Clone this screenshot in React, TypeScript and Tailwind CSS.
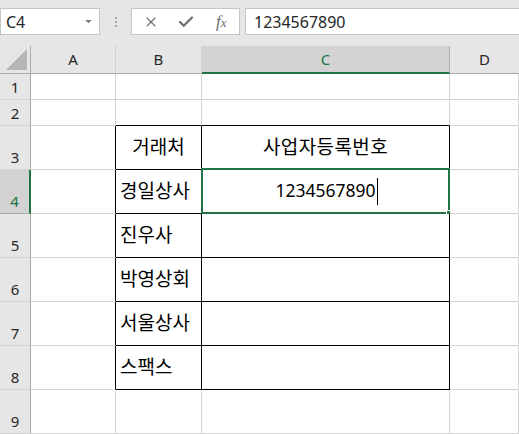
import { Check, ChevronDown, X } from "lucide-react";

const font = { fontFamily: '"Noto Sans", "Noto Sans CJK KR", sans-serif' };

const rows = [
  { n: 1, h: "h-[26px]" },
  { n: 2, h: "h-[26px]" },
  { n: 3, h: "h-[44px]" },
  { n: 4, h: "h-[44px]" },
  { n: 5, h: "h-[44px]" },
  { n: 6, h: "h-[44px]" },
  { n: 7, h: "h-[44px]" },
  { n: 8, h: "h-[44px]" },
  { n: 9, h: "h-[44px]" },
];

const names: Record<number, string> = {
  4: "경일상사",
  5: "진우사",
  6: "박영상회",
  7: "서울상사",
  8: "스팩스",
};

function Cell({ row, col }: { row: number; col: string }) {
  const inTable = row >= 3 && row <= 8;
  // black table borders on B3:C8, grey grid everywhere else
  let right = "border-r-[#d4d4d4]";
  let bottom = "border-b-[#d4d4d4]";
  if (inTable && (col === "B" || col === "C")) {
    right = "border-r-black";
    bottom = "border-b-black";
  }
  if (inTable && col === "A") right = "border-r-black";
  if (row === 2 && (col === "B" || col === "C")) bottom = "border-b-black";

  let content: React.ReactNode = null;
  if (col === "B" && row === 3) content = <span className="w-full text-center">거래처</span>;
  if (col === "C" && row === 3) content = <span className="w-full text-center tracking-[0.4px]">사업자등록번호</span>;
  if (col === "B" && names[row]) content = <span className="pl-[4px]">{names[row]}</span>;

  return (
    <div
      className={`relative flex items-center border-r border-b ${right} ${bottom} bg-white text-[19px] leading-none text-black`}
    >
      {content}
      {col === "C" && row === 4 && (
        <div className="absolute -left-[1px] -top-[2px] -right-[1px] -bottom-[1px] border-2 border-[#217346]">
          <div className="flex h-full items-center justify-center pl-[2px]">
            <span className="text-[17.5px]">1234567890</span>
            <span className="ml-[1px] h-[27px] w-px bg-black" />
          </div>
          <div className="absolute -bottom-[4px] -right-[4px] h-[6px] w-[6px] border border-white bg-[#217346]" />
        </div>
      )}
    </div>
  );
}

export default function App() {
  return (
    <div className="h-[434px] w-[519px] overflow-hidden bg-[#e6e6e6]" style={font}>
      {/* Formula bar */}
      <div className="flex h-[46px] items-start pt-[8px]">
        <div className="flex h-[27px] w-[100px] items-center justify-between border border-[#c6c6c6] bg-white pl-[5px] pr-[4px] text-[16px] text-[#262626]">
          <span>C4</span>
          <ChevronDown size={13} strokeWidth={0} fill="#7a7a7a" className="mt-[-1px]" />
        </div>
        <div className="flex h-[27px] w-[31px] flex-col items-center justify-center gap-[2px]">
          <span className="h-[2px] w-[2px] bg-[#a6a6a6]" />
          <span className="h-[2px] w-[2px] bg-[#a6a6a6]" />
          <span className="h-[2px] w-[2px] bg-[#a6a6a6]" />
        </div>
        <div className="flex h-[27px] w-[109px] items-center border border-[#c6c6c6] bg-white text-[#6d6d6d]">
          <div className="flex w-[36px] justify-center pl-[2px]">
            <X size={16} strokeWidth={1.6} />
          </div>
          <div className="flex w-[36px] justify-center">
            <Check size={18} strokeWidth={3} />
          </div>
          <div className="flex w-[36px] justify-center">
            <span className="text-[17px] italic leading-none" style={{ fontFamily: '"Liberation Serif", serif' }}>
              f<span className="text-[13px]">x</span>
            </span>
          </div>
        </div>
        <div className="ml-[5px] flex h-[27px] flex-1 items-center border border-r-0 border-[#c6c6c6] bg-white pl-[8px] text-[16px] text-[#262626]">
          1234567890
        </div>
      </div>

      {/* Sheet */}
      <div className="grid grid-cols-[31px_85px_86px_248px_1fr]">
        {/* column headers */}
        <div className="relative h-[28px] border-r border-b border-[#ababab] bg-[#e6e6e6]">
          <svg className="absolute bottom-[3px] right-[3px]" width="21" height="21" viewBox="0 0 21 21">
            <polygon points="21,0 21,21 0,21" fill="#b5b5b5" />
          </svg>
        </div>
        {["A", "B"].map((c) => (
          <div
            key={c}
            className="flex h-[28px] items-center justify-center border-r border-b border-r-[#d0d0d0] border-b-[#ababab] bg-[#e6e6e6] text-[15px] text-[#262626]"
          >
            {c}
          </div>
        ))}
        <div className="flex h-[28px] items-center justify-center border-r border-b-2 border-r-[#ababab] border-b-[#217346] bg-[#d2d2d2] text-[15px] text-[#217346]">
          C
        </div>
        <div className="flex h-[28px] items-center justify-center border-b border-b-[#ababab] bg-[#e6e6e6] text-[15px] text-[#262626]">
          D
        </div>

        {rows.map((r) => (
          <div key={r.n} className="contents">
            <div
              className={`flex ${r.h} items-end justify-center border-b pb-[2px] text-[15px] leading-[20px] ${
                r.n === 4
                  ? "border-r-2 border-r-[#217346] border-b-[#ababab] bg-[#d2d2d2] text-[#217346]"
                  : "border-r border-r-[#ababab] border-b-[#d4d4d4] bg-[#e6e6e6] text-[#262626]"
              }`}
            >
              {r.n}
            </div>
            {["A", "B", "C", "D"].map((c) => (
              <Cell key={c} row={r.n} col={c} />
            ))}
          </div>
        ))}
      </div>
    </div>
  );
}
